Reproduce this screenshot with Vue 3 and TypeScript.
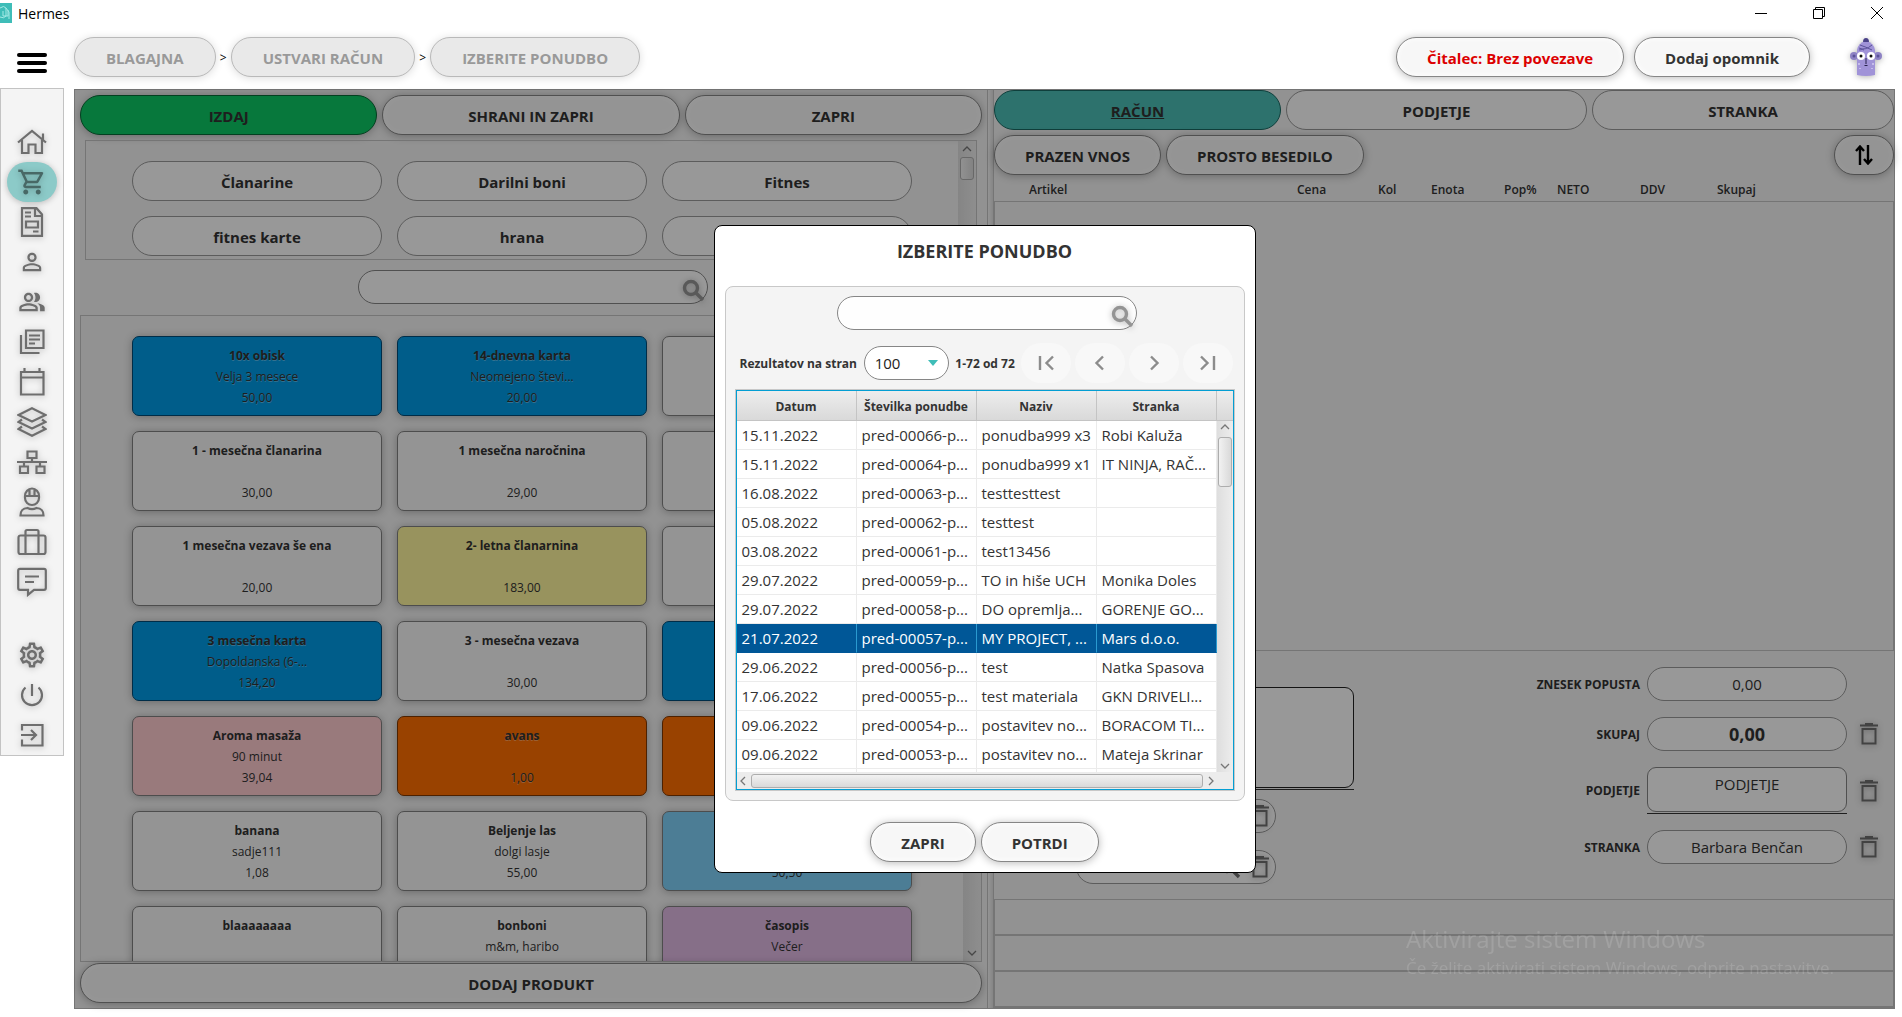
<script setup lang="ts">
import { ref } from 'vue'

interface NavItem {
  label: string
  viewBox: string
  fill?: string
  stroke?: string
  active?: boolean
}

interface Product {
  name: string
  note: string
  price: string
  tone?: string
}

interface Offer {
  date: string
  code: string
  title: string
  client: string
}

const mainNav: NavItem[] = [
  { label: 'Domov', viewBox: '0 0 30 30', stroke: 'M1 15.5 15 4l14 11.500M5 13v13h6.500v-8.500h7V26H25V13M26 6.500V13' },
  {
    label: 'Blagajna', viewBox: '0 0 24 24', active: true,
    fill: 'M15.55 13c.75 0 1.41-.41 1.75-1.03l3.58-6.490A.996.996 0 0 0 20.01 4H5.21l-.94-2H1v2h2l3.600 7.590-1.350 2.440C4.520 15.370 5.480 17 7 17h12v-2H7l1.100-2h7.450zM6.160 6h12.150l-2.760 5H8.530L6.160 6zM7 18c-1.100 0-1.990.9-1.990 2S5.900 22 7 22s2-.9 2-2-.9-2-2-2zm10 0c-1.100 0-1.990.9-1.990 2s.89 2 1.990 2 2-.9 2-2-.9-2-2-2z',
  },
  { label: 'Dokumenti', viewBox: '0 0 30 30', stroke: 'M5 1.200h14.500L25 7.500v21.300H5zM18 2v7h6M8 5.500h6M8 9.500h6M9 14.500h12v6H9zM16 24.500h5.500' },
  {
    label: 'Stranka', viewBox: '-1 -1 26 26',
    fill: 'M12 5.900a2.100 2.100 0 1 1 0 4.200 2.100 2.100 0 0 1 0-4.200m0 9c2.970 0 6.100 1.460 6.100 2.100v1.100H5.900V17c0-.64 3.130-2.100 6.100-2.100M12 4C9.790 4 8 5.790 8 8s1.790 4 4 4 4-1.790 4-4-1.790-4-4-4zm0 9c-2.670 0-8 1.340-8 4v3h16v-3c0-2.660-5.330-4-8-4z',
  },
  {
    label: 'Stranke', viewBox: '-1 -1 26 26',
    fill: 'M16.670 13.130C18.040 14.060 19 15.320 19 17v3h4v-3c0-2.180-3.570-3.470-6.330-3.870zM15 12c2.210 0 4-1.790 4-4s-1.790-4-4-4c-.47 0-.91.1-1.330.24C14.500 5.270 15 6.580 15 8s-.5 2.730-1.330 3.760c.42.14.86.24 1.330.24zM9 12c2.210 0 4-1.790 4-4s-1.790-4-4-4-4 1.790-4 4 1.790 4 4 4zm0-6c1.100 0 2 .9 2 2s-.9 2-2 2-2-.9-2-2 .9-2 2-2zM9 13c-2.670 0-8 1.340-8 4v3h16v-3c0-2.660-5.330-4-8-4zm6 5H3v-.99C3.200 16.290 6.300 15 9 15s5.800 1.290 6 2v1z',
  },
  { label: 'Novice', viewBox: '0 0 30 30', stroke: 'M9 3.500h17.500V21H9zM4 8v18h18.500M12 8.500h11M12 12.500h11M12 16.500h6' },
  { label: 'Koledar', viewBox: '0 0 30 30', stroke: 'M4 5h22.500v22.500H4zM4 10.500h22.500M7.500 1v4M22.500 1v4' },
  { label: 'Zaloga', viewBox: '0 0 30 30', stroke: 'M15 1.200 28.500 8 15 14.500 1.500 8zM5 12.500 1.500 15 15 21.500 28.500 15 25 12.500M5 19.500 1.500 22 15 28.800 28.500 22 25 19.500' },
  { label: 'Organizacija', viewBox: '0 0 30 30', stroke: 'M10.500 4.500h9v6.500h-9zM0 15h30M15 11v4M7 15v4M23 15v4M3 19.500h8v6.500H3zM19.500 19.500h8v6.500h-8z' },
  { label: 'Zaposleni', viewBox: '0 0 30 30', stroke: 'M8 9a7 7.500 0 0 1 14 0v2a7 7 0 0 1-14 0zM7.500 9h15M12.500 3v5M17.500 3v5M3.500 28.500c0-5 2-7 7-7.500 3 1.500 6 1.500 9 0 5 .5 7 2.500 7 7.500z' },
  { label: 'Potovanja', viewBox: '0 0 30 30', stroke: 'M3.500 8.500h23a2 2 0 0 1 2 2v14.500a2 2 0 0 1-2 2h-23a2 2 0 0 1-2-2V10.500a2 2 0 0 1 2-2zM8.500 27V4.500q0-1.500 1.500-1.500h10q1.500 0 1.500 1.500V27' },
  { label: 'Sporočila', viewBox: '0 0 30 30', stroke: 'M3 1.800h24q1.800 0 1.800 1.800v17.400q0 1.800-1.800 1.800H17l-6 5v-5H3q-1.800 0-1.800-1.800V3.600q0-1.800 1.800-1.800zM8 9.500h14M8 15h9' },
]

const footNav: NavItem[] = [
  {
    label: 'Nastavitve', viewBox: '0 0 24 24',
    fill: 'M19.43 12.98c.04-.32.07-.64.07-.98 0-.34-.03-.66-.07-.98l2.110-1.650c.19-.15.24-.42.12-.64l-2-3.460c-.09-.16-.26-.25-.44-.25-.06 0-.12.01-.17.03l-2.490 1c-.52-.4-1.080-.73-1.690-.98l-.38-2.650C14.460 2.180 14.250 2 14 2h-4c-.25 0-.46.18-.49.42l-.38 2.650c-.61.25-1.170.59-1.690.98l-2.490-1c-.06-.02-.12-.03-.18-.03-.17 0-.34.09-.43.25l-2 3.460c-.13.22-.07.49.12.64l2.110 1.650c-.04.32-.07.65-.07.98 0 .33.03.66.07.98l-2.110 1.650c-.19.15-.24.42-.12.64l2 3.460c.09.16.26.25.44.25.06 0 .12-.01.17-.03l2.490-1c.52.4 1.080.73 1.690.98l.38 2.650c.03.24.24.42.49.42h4c.25 0 .46-.18.49-.42l.38-2.650c.61-.25 1.170-.59 1.690-.98l2.490 1c.06.02.12.03.18.03.17 0 .34-.09.43-.25l2-3.460c.12-.22.07-.49-.12-.64l-2.110-1.650zm-1.980-1.710c.04.31.05.52.05.73 0 .21-.02.43-.05.73l-.14 1.130.89.7 1.080.84-.7 1.210-1.270-.51-1.040-.42-.9.68c-.43.32-.84.56-1.250.73l-1.060.43-.16 1.130-.2 1.350h-1.400l-.19-1.350-.16-1.130-1.060-.43c-.43-.18-.83-.41-1.230-.71l-.91-.7-1.060.43-1.270.51-.7-1.210 1.080-.84.89-.7-.14-1.130c-.03-.31-.05-.54-.05-.74s.02-.43.05-.73l.14-1.130-.89-.7-1.080-.84.7-1.210 1.270.51 1.040.42.9-.68c.43-.32.84-.56 1.250-.73l1.060-.43.16-1.130.2-1.350h1.390l.19 1.350.16 1.130 1.060.43c.43.18.83.41 1.230.71l.91.7 1.060-.43 1.270-.51.7 1.210-1.070.85-.89.7.14 1.130zM12 8c-2.210 0-4 1.790-4 4s1.790 4 4 4 4-1.790 4-4-1.790-4-4-4zm0 6c-1.100 0-2-.9-2-2s.9-2 2-2 2 .9 2 2-.9 2-2 2z',
  },
  { label: 'Izklop', viewBox: '0 0 30 30', stroke: 'M8.500 7.500a10 10 0 1 0 13 0M15 4v12' },
  { label: 'Odjava', viewBox: '0 0 30 30', stroke: 'M5 10.500V5h20.500v20.500H5V19.500M4 15h14.500M14 10l5 5-5 5' },
]

const crumbs = ['BLAGAJNA', 'USTVARI RAČUN', 'IZBERITE PONUDBO']
const categories = ['Članarine', 'Darilni boni', 'Fitnes', 'fitnes karte', 'hrana', '']

const products: Product[] = [
  { name: '10x obisk', note: 'Velja 3 mesece', price: '50,00', tone: 'blue' },
  { name: '14-dnevna karta', note: 'Neomejeno števi...', price: '20,00', tone: 'blue' },
  { name: '', note: '', price: '' },
  { name: '1 - mesečna članarina', note: '', price: '30,00' },
  { name: '1 mesečna naročnina', note: '', price: '29,00' },
  { name: '', note: '', price: '' },
  { name: '1 mesečna vezava še ena', note: '', price: '20,00' },
  { name: '2- letna članarnina', note: '', price: '183,00', tone: 'yellow' },
  { name: '', note: '', price: '' },
  { name: '3 mesečna karta', note: 'Dopoldanska (6-...', price: '134,20', tone: 'blue' },
  { name: '3 - mesečna vezava', note: '', price: '30,00' },
  { name: '', note: '', price: '', tone: 'blue' },
  { name: 'Aroma masaža', note: '90 minut', price: '39,04', tone: 'pink' },
  { name: 'avans', note: '', price: '1,00', tone: 'orange' },
  { name: '', note: '', price: '', tone: 'orange' },
  { name: 'banana', note: 'sadje111', price: '1,08' },
  { name: 'Beljenje las', note: 'dolgi lasje', price: '55,00' },
  { name: '', note: '', price: '50,50', tone: 'sky' },
  { name: 'blaaaaaaaa', note: '', price: '' },
  { name: 'bonboni', note: 'm&m, haribo', price: '' },
  { name: 'časopis', note: 'Večer', price: '', tone: 'purple' },
]

const itemColumns = ['Artikel', 'Cena', 'Kol', 'Enota', 'Pop%', 'NETO', 'DDV', 'Skupaj']

const offers: Offer[] = [
  { date: '15.11.2022', code: 'pred-00066-p...', title: 'ponudba999 x3', client: 'Robi Kaluža' },
  { date: '15.11.2022', code: 'pred-00064-p...', title: 'ponudba999 x1', client: 'IT NINJA, RAČ...' },
  { date: '16.08.2022', code: 'pred-00063-p...', title: 'testtesttest', client: '' },
  { date: '05.08.2022', code: 'pred-00062-p...', title: 'testtest', client: '' },
  { date: '03.08.2022', code: 'pred-00061-p...', title: 'test13456', client: '' },
  { date: '29.07.2022', code: 'pred-00059-p...', title: 'TO in hiše UCH', client: 'Monika Doles' },
  { date: '29.07.2022', code: 'pred-00058-p...', title: 'DO opremlja...', client: 'GORENJE GO...' },
  { date: '21.07.2022', code: 'pred-00057-p...', title: 'MY PROJECT, ...', client: 'Mars d.o.o.' },
  { date: '29.06.2022', code: 'pred-00056-p...', title: 'test', client: 'Natka Spasova' },
  { date: '17.06.2022', code: 'pred-00055-p...', title: 'test materiala', client: 'GKN DRIVELI...' },
  { date: '09.06.2022', code: 'pred-00054-p...', title: 'postavitev no...', client: 'BORACOM TI...' },
  { date: '09.06.2022', code: 'pred-00053-p...', title: 'postavitev no...', client: 'Mateja Skrinar' },
  { date: '', code: '', title: '', client: '' },
]

const pagerIcons = [
  { label: 'Prva stran', d: 'M9 8v14M22 8.500 15.500 15l6.500 6.500' },
  { label: 'Prejšnja stran', d: 'M18 8.500 11.500 15l6.500 6.500' },
  { label: 'Naslednja stran', d: 'M12 8.500 18.500 15 12 21.500' },
  { label: 'Zadnja stran', d: 'M8 8.500 14.500 15 8 21.500M21 8v14' },
]

const selected = ref(7)
const pageSize = ref('100')
</script>

<template>
  <div class="shell">
    <header class="titlebar">
      <svg class="app-icon" viewBox="0 0 12 20" aria-hidden="true">
        <rect width="12" height="20" fill="#3fbdb8" />
        <path d="M0 5q4-3 6 0v8q-2 3-6 1M3 8v5h5V7M6 5l3 4v7" fill="none" stroke="#a6ebe6" />
      </svg>
      <span class="app-name">Hermes</span>
      <div class="window-controls">
        <button type="button" aria-label="Pomanjšaj"><svg viewBox="0 0 14 14"><path d="M1 7.500h12" /></svg></button>
        <button type="button" aria-label="Obnovi"><svg viewBox="0 0 14 14"><path d="M1.500 3.500h9v9h-9zM3.500 3.500v-2h9v9h-2" /></svg></button>
        <button type="button" aria-label="Zapri okno"><svg viewBox="0 0 14 14"><path d="m1 1 12 12M13 1 1 13" /></svg></button>
      </div>
    </header>

    <div class="topbar">
      <button type="button" class="burger" aria-label="Meni"><i></i><i></i><i></i></button>
      <nav class="crumbs" aria-label="Pot">
        <template v-for="(crumb, i) in crumbs" :key="crumb">
          <span v-if="i > 0" class="crumb-sep">&gt;</span>
          <button type="button" class="pill raised crumb" disabled>{{ crumb }}</button>
        </template>
      </nav>
      <div class="top-actions">
        <button type="button" class="pill raised alert">Čitalec: Brez povezave</button>
        <button type="button" class="pill raised">Dodaj opomnik</button>
        <svg class="avatar" viewBox="0 0 32 38" aria-hidden="true">
          <circle cx="4" cy="18" r="4" fill="#8d82c4" />
          <circle cx="28" cy="18" r="4" fill="#8d82c4" />
          <circle cx="4" cy="18" r="1.500" fill="#5b5299" />
          <circle cx="28" cy="18" r="1.500" fill="#5b5299" />
          <path d="M7 37V12q1-7 9-9 8 2 9 9v25q-9 2-18 0z" fill="#a093d8" />
          <path d="M13 4q0-4 3-4t3 4z" fill="#4a4288" />
          <path d="M9 10q6 3 13-3M10 7q6 2 12 5M9 12q4-1 5 0" fill="none" stroke="#5b5299" />
          <circle cx="11" cy="18" r="4" fill="#fff" />
          <circle cx="21" cy="18" r="4" fill="#fff" />
          <circle cx="11" cy="18" r="1.500" fill="#111" />
          <circle cx="21" cy="18" r="1.500" fill="#111" />
          <path d="M16 20v6M14.500 27.500h3" fill="none" stroke="#27214d" />
          <path d="M9 25v2M23 25v2M10 30v1M22 30v1" stroke="#e9e5ff" />
        </svg>
      </div>
    </div>

    <div class="body">
      <aside class="sidebar">
        <a v-for="item in mainNav" :key="item.label" href="#" class="nav-item" :class="{ active: item.active }" :aria-label="item.label">
          <svg :viewBox="item.viewBox">
            <path v-if="item.fill" :d="item.fill" class="solid" />
            <path v-else :d="item.stroke" class="line" />
          </svg>
        </a>
        <div class="nav-gap"></div>
        <a v-for="item in footNav" :key="item.label" href="#" class="nav-item" :aria-label="item.label">
          <svg :viewBox="item.viewBox">
            <path v-if="item.fill" :d="item.fill" class="solid" />
            <path v-else :d="item.stroke" class="line" />
          </svg>
        </a>
      </aside>

      <main class="workspace">
        <section class="catalog">
          <div class="actions">
            <button type="button" class="pill raised go">IZDAJ</button>
            <button type="button" class="pill raised">SHRANI IN ZAPRI</button>
            <button type="button" class="pill raised">ZAPRI</button>
          </div>
          <div class="category-box">
            <div class="tiles">
              <button v-for="(c, i) in categories" :key="i" type="button" class="pill">{{ c }}</button>
            </div>
            <div class="vbar">
              <svg viewBox="0 0 16 16"><path d="m4 10 4-4 4 4" /></svg>
              <span class="thumb short"></span>
            </div>
          </div>
          <div class="search-row">
            <div class="search wide">
              <input type="search" aria-label="Iskanje izdelkov">
              <svg viewBox="0 0 24 24"><circle cx="9" cy="9" r="6.500" /><path d="m14 14 7 7" /></svg>
            </div>
          </div>
          <div class="product-box">
            <div class="tiles">
              <button v-for="(p, i) in products" :key="i" type="button" class="card" :class="p.tone">
                <strong>{{ p.name }}</strong>
                <span>{{ p.note }}</span>
                <span>{{ p.price }}</span>
              </button>
            </div>
            <div class="vbar">
              <svg viewBox="0 0 16 16"><path d="m4 10 4-4 4 4" /></svg>
              <span class="fill"></span>
              <svg viewBox="0 0 16 16"><path d="m4 6 4 4 4-4" /></svg>
            </div>
          </div>
          <button type="button" class="pill raised add">DODAJ PRODUKT</button>
        </section>

        <div class="splitter"></div>

        <section class="invoice">
          <div class="tabs">
            <button type="button" class="pill current">RAČUN</button>
            <button type="button" class="pill">PODJETJE</button>
            <button type="button" class="pill">STRANKA</button>
          </div>
          <div class="tools">
            <button type="button" class="pill raised">PRAZEN VNOS</button>
            <button type="button" class="pill raised">PROSTO BESEDILO</button>
            <button type="button" class="pill raised sort" aria-label="Razvrsti">
              <svg viewBox="0 0 18 20"><path d="M5 20V2M1 6l4-4.500L9 6M13 0v18M9 14l4 4.500 4-4.500" /></svg>
            </button>
          </div>
          <table class="items">
            <thead>
              <tr><th v-for="c in itemColumns" :key="c">{{ c }}</th></tr>
            </thead>
          </table>
          <div class="items-body"></div>
          <div class="details">
            <div class="notes">
              <div class="underlined"><textarea aria-label="Opomba"></textarea></div>
              <div v-for="n in 2" :key="n" class="picker">
                <input type="text" :aria-label="'Izbira ' + n">
                <svg class="lens" viewBox="0 0 24 24"><circle cx="9" cy="9" r="6.500" /><path d="m14 14 7 7" /></svg>
                <svg class="bin" viewBox="0 0 18 22"><path d="M0 2.500h18M5 1h8M2.500 6v14.500h13V6z" /></svg>
              </div>
            </div>
            <div class="totals">
              <label for="discount">ZNESEK POPUSTA</label>
              <input id="discount" type="text" value="0,00">
              <span></span>
              <label for="total">SKUPAJ</label>
              <input id="total" type="text" class="sum" value="0,00">
              <button type="button" aria-label="Počisti skupaj"><svg class="bin" viewBox="0 0 18 22"><path d="M0 2.500h18M5 1h8M2.500 6v14.500h13V6z" /></svg></button>
              <label for="company">PODJETJE</label>
              <div class="underlined"><textarea id="company">PODJETJE</textarea></div>
              <button type="button" aria-label="Počisti podjetje"><svg class="bin" viewBox="0 0 18 22"><path d="M0 2.500h18M5 1h8M2.500 6v14.500h13V6z" /></svg></button>
              <label for="client">STRANKA</label>
              <input id="client" type="text" value="Barbara Benčan">
              <button type="button" aria-label="Počisti stranko"><svg class="bin" viewBox="0 0 18 22"><path d="M0 2.500h18M5 1h8M2.500 6v14.500h13V6z" /></svg></button>
            </div>
          </div>
          <div class="ledger"><div></div><div></div><div></div></div>
        </section>

        <div class="backdrop">
          <section class="dialog" role="dialog" aria-labelledby="dialog-title">
            <h1 id="dialog-title">IZBERITE PONUDBO</h1>
            <div class="panel">
              <div class="search-row inner">
                <div class="search">
                  <input type="search" aria-label="Iskanje ponudb">
                  <svg viewBox="0 0 24 24"><circle cx="9" cy="9" r="6.500" /><path d="m14 14 7 7" /></svg>
                </div>
              </div>
              <div class="pager">
                <label for="page-size">Rezultatov na stran</label>
                <div class="select">
                  <select id="page-size" v-model="pageSize">
                    <option>100</option>
                    <option>50</option>
                  </select>
                  <svg viewBox="0 0 10 6"><path d="M0 0h10L5 6z" /></svg>
                </div>
                <span class="range">1-72 od 72</span>
                <div class="pages">
                  <button v-for="p in pagerIcons" :key="p.label" type="button" :aria-label="p.label">
                    <svg viewBox="0 0 30 30"><path :d="p.d" /></svg>
                  </button>
                </div>
              </div>
              <div class="grid">
                <div class="grid-main">
                  <div class="rows">
                    <table>
                      <thead>
                        <tr><th>Datum</th><th>Številka ponudbe</th><th>Naziv</th><th>Stranka</th></tr>
                      </thead>
                      <tbody>
                        <tr v-for="(o, i) in offers" :key="i" :class="{ selected: i === selected }" @click="selected = i">
                          <td>{{ o.date }}</td><td>{{ o.code }}</td><td>{{ o.title }}</td><td>{{ o.client }}</td>
                        </tr>
                      </tbody>
                    </table>
                  </div>
                  <div class="grid-side">
                    <div class="side-head"></div>
                    <div class="vbar">
                      <svg viewBox="0 0 16 16"><path d="m4 8 4-4 4 4" /></svg>
                      <span class="thumb"></span>
                      <span class="fill"></span>
                      <svg viewBox="0 0 16 16"><path d="m4 8 4 4 4-4" /></svg>
                    </div>
                  </div>
                </div>
                <div class="hbar">
                  <svg viewBox="1 1 14 14"><path d="M9 4 5 8l4 4" /></svg>
                  <span class="hthumb"></span>
                  <svg viewBox="1 1 14 14"><path d="m7 4 4 4-4 4" /></svg>
                </div>
              </div>
            </div>
            <div class="confirm">
              <button type="button" class="pill raised">ZAPRI</button>
              <button type="button" class="pill raised">POTRDI</button>
            </div>
          </section>
        </div>
      </main>
    </div>

    <div class="watermark">
      <p class="big">Aktivirajte sistem Windows</p>
      <p>Če želite aktivirati sistem Windows, odprite nastavitve.</p>
    </div>
  </div>
</template>

<style>
body {
  overflow: hidden;
}
</style>

<style scoped>
.shell,
.shell * {
  box-sizing: border-box;
}

.shell {
  display: flex;
  flex-direction: column;
  height: 100vh;
  padding-bottom: 8px;
  background: #fff;
  color: #333;
  font-family: "Open Sans", "Noto Sans", sans-serif;
  font-size: 15px;
}

button,
input,
select,
textarea {
  margin: 0;
  color: inherit;
  font: inherit;
}

button {
  padding: 0;
  border: 0;
  background: none;
}

svg {
  display: block;
}

/* Title bar */
.titlebar {
  display: flex;
  flex: none;
  align-items: center;
  height: 26px;
}

.app-icon {
  width: 12px;
  height: 20px;
}

.app-name {
  margin-left: 6px;
  color: #000;
  font-size: 14px;
}

.window-controls {
  display: flex;
  gap: 44px;
  margin: 0 18px 0 auto;
}

.window-controls svg {
  width: 14px;
  height: 14px;
  fill: none;
  stroke: #000;
}

/* Top bar */
.topbar {
  display: flex;
  flex: none;
  align-items: center;
  height: 62px;
}

.burger {
  display: flex;
  flex-direction: column;
  gap: 4px;
  width: 30px;
  margin: 12px 27px 0 17px;
}

.burger i {
  height: 4px;
  border-radius: 2px;
  background: #000;
}

.crumbs,
.top-actions {
  display: flex;
  align-items: center;
}

.top-actions {
  gap: 10px;
  margin-left: auto;
  padding-right: 20px;
}

.avatar {
  width: 32px;
  height: 38px;
  margin-left: 30px;
  filter: drop-shadow(0 1px 3px rgba(0, 0, 0, .3));
}

.crumb-sep {
  width: 15px;
  color: #000;
  font-size: 12px;
  text-align: center;
}

.pill {
  height: 40px;
  padding: 1px 30px 0;
  border: 1px solid #868686;
  border-radius: 20px;
  background: #fdfdfd;
  font-weight: 700;
  white-space: nowrap;
}

.raised {
  background: #f7f7f7;
  box-shadow: 0 1px 8px rgba(0, 0, 0, .28), inset 0 0 6px #fff;
}

.pill.crumb {
  padding: 1px 31px 0;
  border-color: #b9b9b9;
  background: #e9e9e9;
  box-shadow: 0 1px 8px rgba(0, 0, 0, .14);
  color: #999;
}

.alert {
  color: #dc0000;
}

/* Sidebar */
.body {
  display: flex;
  flex: 1;
  min-height: 0;
}

.sidebar {
  display: flex;
  flex: none;
  flex-direction: column;
  align-items: center;
  align-self: flex-start;
  width: 64px;
  padding: 33px 0 0;
  border: 1px solid #c3c3c3;
  background: #f4f4f4;
}

.nav-item {
  display: flex;
  align-items: center;
  justify-content: center;
  width: 50px;
  height: 40px;
  border-radius: 20px;
  color: #6e6e6e;
}

.nav-item svg {
  width: 30px;
  height: 30px;
  filter: drop-shadow(0 1px 3px rgba(0, 0, 0, .25));
}

.nav-item.active {
  background: #8ccac8;
  box-shadow: 0 1px 6px rgba(0, 0, 0, .25);
  color: #486866;
}

.nav-gap {
  height: 33px;
}

.solid {
  fill: currentColor;
}

.line {
  fill: none;
  stroke: currentColor;
  stroke-width: 2.2;
}

/* Workspace */
.workspace {
  position: relative;
  display: grid;
  flex: 1;
  grid-template-columns: minmax(0, 912fr) 7px minmax(0, 900fr);
  min-width: 0;
  margin: 1px 7px 0 10px;
  border: 1px solid #c3c3c3;
  background: #f3f3f3;
}

.catalog {
  display: flex;
  flex-direction: column;
  min-height: 0;
  padding: 5px;
}

.actions {
  display: grid;
  flex: none;
  grid-template-columns: repeat(3, 1fr);
  gap: 5px;
}

.pill.go {
  border-color: #086b36;
  background: #0cc864;
  box-shadow: 0 1px 8px rgba(0, 0, 0, .28);
}

.category-box {
  display: flex;
  flex: none;
  height: 120px;
  margin: 5px 5px 0;
  overflow: hidden;
  border: 1px solid #c3c3c3;
}

.tiles {
  display: grid;
  flex: 1;
  grid-template-columns: repeat(3, minmax(0, 250px));
  gap: 15px;
  align-content: start;
  justify-content: center;
  padding-top: 20px;
}

.category-box .pill {
  border-color: #999;
}

.vbar {
  display: flex;
  flex: none;
  flex-direction: column;
  align-items: center;
  width: 16px;
  background: linear-gradient(90deg, #dedede, #ededed);
}

.catalog .vbar {
  width: 18px;
}

.vbar svg {
  flex: none;
  width: 16px;
  height: 16px;
  fill: none;
  stroke: #777;
  stroke-width: 1.3;
}

.hbar svg {
  flex: none;
  width: 14px;
  height: 14px;
  fill: none;
  stroke: #777;
  stroke-width: 1.3;
}

.fill {
  flex: 1;
}

.thumb {
  flex: none;
  width: 14px;
  height: 50px;
  border: 1px solid #adadad;
  border-radius: 3px;
  background: linear-gradient(90deg, #f2f2f2, #d9d9d9);
}

.thumb.short {
  height: 23px;
}

.search-row {
  display: flex;
  flex: none;
  justify-content: center;
  padding: 10px 0 11px 4px;
}

.search-row.inner {
  padding: 0 0 0 4px;
}

.search {
  position: relative;
  width: 300px;
}

.search.wide {
  width: 350px;
}

.search input {
  display: block;
  width: 100%;
  height: 34px;
  padding: 0 40px 0 14px;
  border: 1px solid #868686;
  border-radius: 17px;
  outline: 0;
  background: #fefefe;
  appearance: none;
}

.search svg {
  position: absolute;
  right: 2px;
  bottom: 1px;
  width: 24px;
  height: 24px;
  fill: none;
  stroke: #949494;
  stroke-width: 3.4;
  filter: drop-shadow(0 1px 3px rgba(0, 0, 0, .3));
}

.product-box {
  display: flex;
  flex: 1;
  min-height: 0;
  overflow: hidden;
  border: 1px solid #c3c3c3;
}

.card {
  display: flex;
  flex-direction: column;
  align-items: center;
  height: 80px;
  padding-top: 8px;
  border: 1px solid #808080;
  border-radius: 7px;
  background: #f7f7f7;
  box-shadow: 0 1px 8px rgba(0, 0, 0, .28);
  font-size: 12px;
  line-height: 21px;
}

.card strong,
.card span {
  height: 21px;
}

.blue {
  border-color: #004c78;
  background: #009be6;
  text-shadow: 0 1px 0 rgba(255, 255, 255, .35);
}

.yellow {
  background: #fef59d;
}

.pink {
  background: #ffcbcf;
}

.orange {
  border-color: #803700;
  background: #ff6e00;
  text-shadow: 0 1px 0 rgba(255, 255, 255, .35);
}

.sky {
  background: #7fd0f8;
}

.purple {
  background: #e0b9e3;
}

.add {
  flex: none;
  margin-top: 1px;
}

.splitter {
  border: solid #c3c3c3;
  border-width: 0 1px;
  background: linear-gradient(90deg, #f7f7f7, #dfdfdf);
}

/* Invoice */
.invoice {
  display: flex;
  flex-direction: column;
  min-height: 0;
}

.tabs {
  display: grid;
  flex: none;
  grid-template-columns: 287fr 301fr 302fr;
  gap: 5px;
}

.tabs .pill {
  border-color: #999;
}

.tabs .current {
  border-color: #1a6a64;
  background: #4bbeb6;
  text-decoration: underline;
}

.tools {
  display: flex;
  flex: none;
  gap: 5px;
  padding-top: 5px;
}

.pill.sort {
  width: 60px;
  margin-left: auto;
  padding: 0 20px;
}

.sort svg {
  width: 18px;
  height: 20px;
  fill: none;
  stroke: #000;
  stroke-width: 2.4;
}

.items {
  flex: none;
  width: 100%;
  height: 26px;
  border-collapse: collapse;
  table-layout: fixed;
}

.items th {
  width: 9%;
  padding: 4px 0 0;
  font-size: 12px;
  font-weight: 600;
  line-height: 16px;
  text-align: left;
}

.items th:nth-child(1) {
  width: 303px;
  padding-left: 35px;
}

.items th:nth-child(2) {
  width: 81px;
}

.items th:nth-child(3),
.items th:nth-child(5) {
  width: 53px;
}

.items th:nth-child(4) {
  width: 73px;
}

.items th:nth-child(6) {
  width: 83px;
}

.items th:nth-child(7) {
  width: 77px;
}

.items th:nth-child(8) {
  width: auto;
}

.items-body {
  flex: 1;
  min-height: 0;
  border: 1px solid #c3c3c3;
}

.details {
  display: flex;
  flex: none;
  justify-content: space-between;
  height: 248px;
}

.notes {
  width: 360px;
  padding: 36px 0 0 82px;
}

.underlined {
  border-bottom: 1px solid #333;
}

.underlined textarea {
  display: block;
  width: 100%;
  height: 45px;
  margin-bottom: 1px;
  padding: 6px 10px;
  overflow: hidden;
  border: 1px solid #868686;
  border-radius: 9px;
  outline: 0;
  background: #fdfdfd;
  text-align: center;
  resize: none;
}

.notes .underlined textarea {
  height: 101px;
  border-color: #222;
}

.picker {
  position: relative;
  width: 200px;
  margin-top: 9px;
}

.picker + .picker {
  margin-top: 17px;
}

.details input {
  display: block;
  width: 200px;
  height: 34px;
  padding: 0 14px;
  border: 1px solid #999;
  border-radius: 17px;
  outline: 0;
  background: #fdfdfd;
  text-align: center;
}

.details .sum {
  font-size: 18px;
  font-weight: 700;
}

.bin {
  width: 18px;
  height: 22px;
  fill: none;
  stroke: #6e6e6e;
  stroke-width: 2;
  filter: drop-shadow(0 1px 3px rgba(0, 0, 0, .3));
}

.picker .bin {
  position: absolute;
  right: 7px;
  bottom: 6px;
}

.picker .lens {
  position: absolute;
  right: 34px;
  bottom: 4px;
  width: 24px;
  height: 24px;
  fill: none;
  stroke: #6e6e6e;
  stroke-width: 3.4;
}

.totals {
  display: grid;
  grid-template-columns: auto 200px 47px;
  row-gap: 16px;
  align-content: start;
  align-items: center;
  padding-top: 16px;
}

.totals label {
  padding-right: 7px;
  font-size: 12px;
  font-weight: 700;
  text-align: right;
}

.totals button {
  justify-self: start;
  padding-left: 13px;
}

.ledger {
  display: grid;
  flex: none;
  grid-template-rows: repeat(3, 36px);
  border-top: 1px solid #c3c3c3;
  border-right: 1px solid #c3c3c3;
  border-left: 1px solid #c3c3c3;
}

.ledger div {
  border-bottom: 2px solid #c3c3c3;
}

/* Dialog */
.backdrop {
  position: absolute;
  inset: -1px;
  display: flex;
  align-items: center;
  justify-content: center;
  background: rgba(0, 0, 0, .4);
}

.dialog {
  width: 542px;
  padding: 0 10px 10px;
  border: 1px solid #000;
  border-radius: 8px;
  background: #fff;
}

h1 {
  margin: 0 0 10px;
  font-size: 18px;
  font-weight: 700;
  line-height: 50px;
  text-align: center;
}

.panel {
  padding: 9px;
  border: 1px solid #c8c8c8;
  border-radius: 8px;
  background: #f4f4f4;
}

.pager {
  display: flex;
  align-items: center;
  justify-content: space-between;
  margin: 13px 0 7px;
  padding: 0 1px 0 5px;
  font-size: 12px;
  font-weight: 700;
}

.select {
  position: relative;
}

.select select {
  display: block;
  width: 85px;
  height: 34px;
  padding: 0 10px;
  border: 1px solid #868686;
  border-radius: 17px;
  background: #fff;
  color: #222;
  font-size: 15px;
  font-weight: 400;
  appearance: none;
}

.select svg {
  position: absolute;
  top: 14px;
  right: 11px;
  width: 10px;
  height: 6px;
  fill: #3fbdb8;
  pointer-events: none;
}

.pages {
  display: flex;
  gap: 4px;
}

.pages button {
  display: flex;
  align-items: center;
  justify-content: center;
  width: 50px;
  height: 40px;
  border-radius: 20px;
  background: #f8f8f8;
}

.pages svg {
  width: 30px;
  height: 30px;
  fill: none;
  stroke: #8c8c8c;
  stroke-width: 2.4;
}

.grid {
  margin: 1px;
  border: 1px solid #039ed3;
  outline: 1px solid #c8c8c8;
  background: #ececec;
}

.grid-main {
  display: flex;
  height: 381px;
}

.rows {
  flex: 1;
  overflow: hidden;
  background: #fff;
}

.rows table {
  width: 100%;
  border-collapse: separate;
  border-spacing: 0;
  table-layout: fixed;
}

.rows th,
.side-head {
  height: 30px;
  padding: 2px 0 0;
  border-right: 1px solid #c4c4c4;
  border-bottom: 1px solid #c4c4c4;
  background: linear-gradient(#ededed, #d9d9d9);
  font-size: 12px;
  font-weight: 700;
}

.side-head {
  flex: none;
  border-right: 0;
}

.rows td {
  height: 29px;
  padding: 0 0 0 5px;
  overflow: hidden;
  border-right: 1px solid #ebebeb;
  border-bottom: 1px solid #ebebeb;
  line-height: 28px;
  white-space: nowrap;
}

.rows .selected td {
  border-right-color: #2a9ad0;
  border-bottom-color: #005797;
  background: #005797;
  color: #fff;
}

.grid-side {
  display: flex;
  flex-direction: column;
  width: 16px;
}

.grid-side .vbar {
  flex: 1;
}

.hbar {
  display: flex;
  align-items: center;
  height: 17px;
  padding-right: 16px;
  background: #ececec;
}

.hthumb {
  flex: 1;
  height: 14px;
  border: 1px solid #adadad;
  border-radius: 3px;
  background: linear-gradient(#f2f2f2, #d9d9d9);
}

.confirm {
  display: flex;
  gap: 5px;
  justify-content: center;
  margin-top: 21px;
}

.watermark {
  position: fixed;
  right: 68px;
  bottom: 37px;
  color: rgba(255, 255, 255, .14);
  pointer-events: none;
}

.watermark p {
  margin: 0;
  font-size: 17px;
  line-height: 24px;
}

.watermark .big {
  font-size: 24px;
  line-height: 34px;
}
</style>
